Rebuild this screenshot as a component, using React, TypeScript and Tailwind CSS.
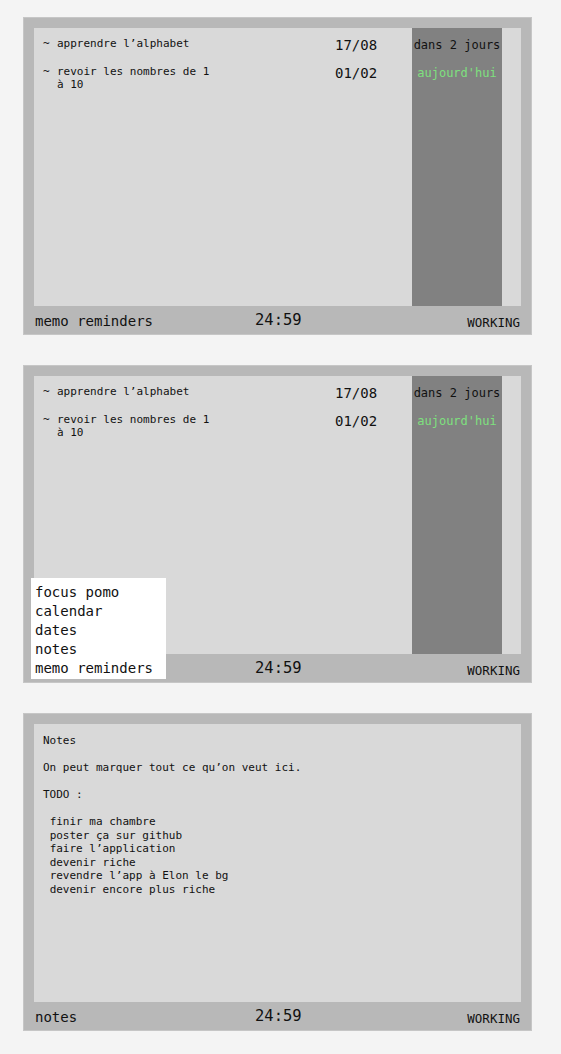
import React from 'react';

interface Reminder {
  text: string;
  date: string;
  due: string;
  today?: boolean;
}

const reminders: Reminder[] = [
  { text: 'apprendre l’alphabet', date: '17/08', due: 'dans 2 jours' },
  { text: 'revoir les nombres de 1 à 10', date: '01/02', due: "aujourd'hui", today: true },
];

const menuItems = ['focus pomo', 'calendar', 'dates', 'notes', 'memo reminders'];

const notesText = `Notes

On peut marquer tout ce qu’on veut ici.

TODO :

 finir ma chambre
 poster ça sur github
 faire l’application
 devenir riche
 revendre l’app à Elon le bg
 devenir encore plus riche`;

const mono = { fontFamily: '"DejaVu Sans Mono", "Liberation Mono", monospace' };

const StatusBar: React.FC<{ label: string }> = ({ label }) => (
  <div className="flex h-[28px] items-center px-[11px] pt-[2px] text-[#111]">
    <span className="w-[220px] text-[14px] leading-none">{label}</span>
    <span className="text-[15.5px] leading-none">24:59</span>
    <span className="ml-auto mt-[4px] text-[12.5px] leading-none">WORKING</span>
  </div>
);

const Panel: React.FC<{ label: string; children: React.ReactNode; menu?: boolean }> = ({ label, children, menu }) => (
  <div className="relative w-[509px] border border-[#c6c6c6] bg-[#b8b8b8]" style={mono}>
    <div className="px-[10px] pt-[10px]">
      <div className="h-[278px] bg-[#d9d9d9]">{children}</div>
    </div>
    <StatusBar label={label} />
    {menu && (
      <div className="absolute bottom-[3px] left-[7px] w-[135px] bg-white px-[4px] pt-[5px] pb-[1px] text-[14px] leading-[19px] text-[#111]">
        {menuItems.map((m) => (
          <div key={m}>{m}</div>
        ))}
      </div>
    )}
  </div>
);

const Reminders: React.FC = () => (
  <div className="flex h-full">
    <div className="flex-1 pl-[9px] pt-[9px] text-[#111]">
      {reminders.map((r) => (
        <div key={r.date} className="flex h-[28px] items-start">
          <span className="w-[14px] text-[11px] leading-[13px]">~</span>
          <span className="w-[160px] text-[11px] leading-[13px]">{r.text}</span>
          <span className="ml-[118px] text-[14px] leading-[16px]">{r.date}</span>
        </div>
      ))}
    </div>
    <div className="w-[90px] bg-[#818181] pt-[9px]">
      {reminders.map((r) => (
        <div
          key={r.date}
          className={`h-[28px] text-center text-[12px] leading-[16px] ${r.today ? 'text-[#7ee07e]' : 'text-[#111]'}`}
        >
          {r.due}
        </div>
      ))}
    </div>
    <div className="w-[19px]" />
  </div>
);

export default function App() {
  return (
    <div className="min-h-screen bg-[#f4f4f4] pt-[17px] pl-[23px]">
      <div className="flex flex-col gap-[30px]">
        <Panel label="memo reminders">
          <Reminders />
        </Panel>
        <Panel label="" menu>
          <Reminders />
        </Panel>
        <Panel label="notes">
          <pre className="whitespace-pre-wrap px-[9px] pt-[10px] text-[11px] leading-[13.5px] text-[#111]" style={mono}>
            {notesText}
          </pre>
        </Panel>
      </div>
    </div>
  );
}
